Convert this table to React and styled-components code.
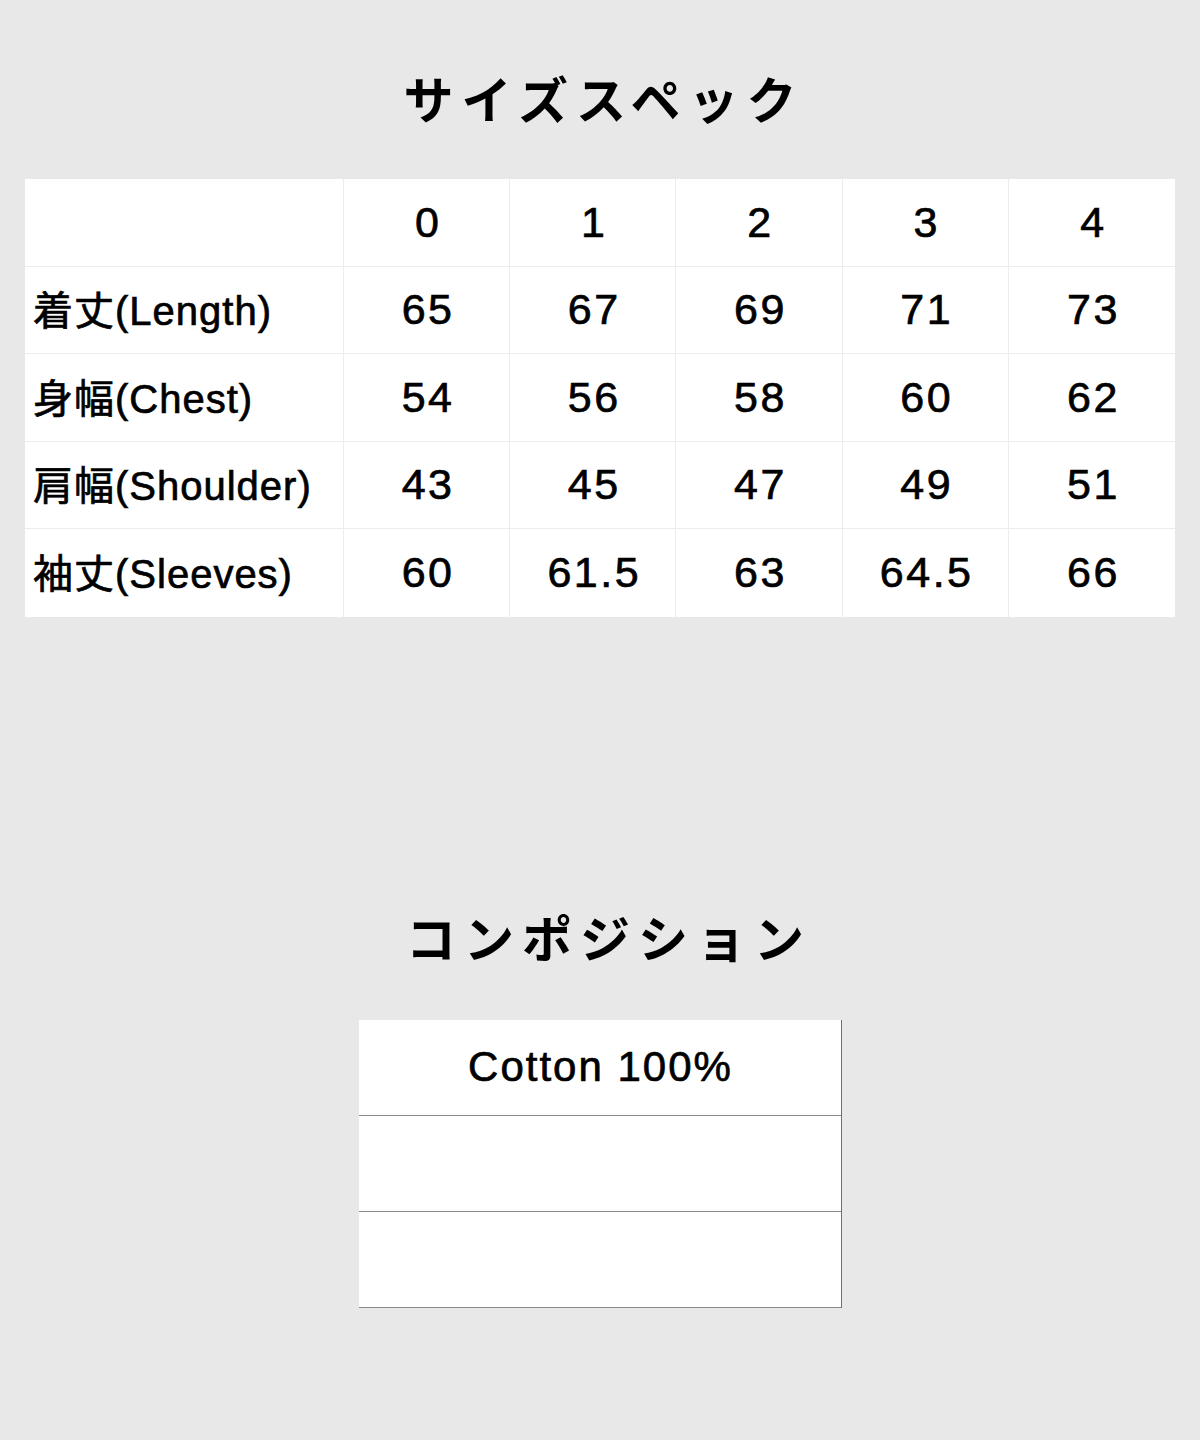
import React from "react";
import styled, { createGlobalStyle } from "styled-components";

const GlobalStyle = createGlobalStyle`
  html, body {
    margin: 0;
    padding: 0;
    background: #e8e8e8;
  }
`;

const Page = styled.div`
  width: 1200px;
  min-height: 1440px;
  background: #e8e8e8;
  display: flex;
  flex-direction: column;
  align-items: center;
  color: #000;
`;

const Heading = styled.h2`
  margin: ${(p) => p.$top}px 0 0;
  height: 50px;
  font-family: "Noto Sans CJK JP", sans-serif;
  font-weight: 700;
  font-size: 50px;
  line-height: 50px;
  letter-spacing: 8px;
  padding-left: ${(p) => p.$shift || 8}px;
`;

const SizeTable = styled.div`
  margin-top: 57px;
  width: 1150px;
  display: grid;
  grid-template-columns: 319px repeat(5, 1fr);
  grid-auto-rows: 87.5px;
  background: #fff;
`;

const Cell = styled.div`
  box-sizing: border-box;
  display: flex;
  align-items: center;
  justify-content: ${(p) => (p.$label ? "flex-start" : "center")};
  padding-left: ${(p) => (p.$label ? "8px" : "3px")};
  padding-bottom: ${(p) => (p.$label ? "3px" : "0")};
  border-right: ${(p) => (p.$lastCol ? "none" : "1px solid #ececec")};
  border-bottom: ${(p) => (p.$lastRow ? "none" : "1px solid #ececec")};
  font-family: "Liberation Sans", "Noto Sans CJK JP", sans-serif;
  font-size: ${(p) => (p.$label ? 40 : 43)}px;
  letter-spacing: ${(p) => (p.$label ? 1 : 2.5)}px;
  -webkit-text-stroke: 0.7px #000;
  white-space: nowrap;
`;

const CompTable = styled.div`
  margin-top: 59px;
  width: 482px;
  background: #fff;
  border-right: 1px solid #707070;
  display: flex;
  flex-direction: column;
`;

const CompRow = styled.div`
  height: 95px;
  border-bottom: 1px solid #8a8a8a;
  display: flex;
  align-items: center;
  justify-content: center;
  padding-left: 2px;
  font-family: "Liberation Sans", sans-serif;
  font-size: 42px;
  letter-spacing: 2px;
  -webkit-text-stroke: 0.7px #000;
`;

const sizes = ["0", "1", "2", "3", "4"];
const rows = [
  ["着丈(Length)", "65", "67", "69", "71", "73"],
  ["身幅(Chest)", "54", "56", "58", "60", "62"],
  ["肩幅(Shoulder)", "43", "45", "47", "49", "51"],
  ["袖丈(Sleeves)", "60", "61.5", "63", "64.5", "66"],
];

export default function App() {
  return (
    <Page>
      <GlobalStyle />
      <Heading $top={72}>サイズスペック</Heading>
      <SizeTable>
        <Cell $label />
        {sizes.map((s, i) => (
          <Cell key={s} $lastCol={i === sizes.length - 1}>
            {s}
          </Cell>
        ))}
        {rows.map((row, r) =>
          row.map((v, c) => (
            <Cell
              key={r + "-" + c}
              $label={c === 0}
              $lastCol={c === row.length - 1}
              $lastRow={r === rows.length - 1}
            >
              {v}
            </Cell>
          ))
        )}
      </SizeTable>

      <Heading $top={294} $shift={18}>コンポジション</Heading>
      <CompTable>
        <CompRow>Cotton 100%</CompRow>
        <CompRow />
        <CompRow />
      </CompTable>
    </Page>
  );
}
